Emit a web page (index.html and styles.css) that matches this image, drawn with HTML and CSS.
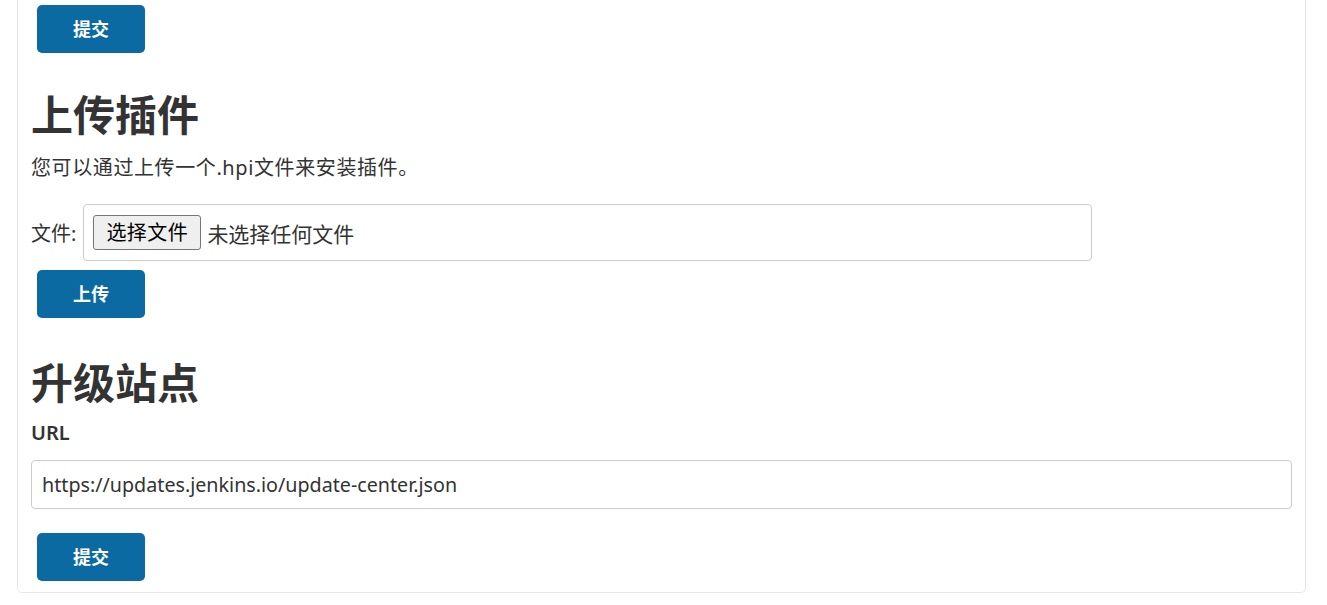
FILE: index.html
```html
<!DOCTYPE html>
<html lang="zh-CN">
<head>
    <meta charset="UTF-8">
    <meta name="viewport" content="width=device-width, initial-scale=1.0">
    <title>插件管理</title>
    <link rel="stylesheet" href="styles.css">
</head>
<body>
    <div class="panel">
        <div class="btn-row">
            <button class="btn" type="button">提交</button>
        </div>

        <h2 class="section-title">上传插件</h2>
        <p class="desc">您可以通过上传一个.hpi文件来安装插件。</p>
        <div class="file-row">
            <span class="file-label">文件:</span>
            <label class="file-box">
                <input type="file" name="name" class="file-input">
                <span class="file-btn">选择文件</span>
                <span class="file-name">未选择任何文件</span>
            </label>
        </div>
        <div class="btn-row upload-row">
            <button class="btn" type="button">上传</button>
        </div>

        <h2 class="section-title site-title">升级站点</h2>
        <div class="field-label">URL</div>
        <input class="url-input" type="text" value="https://updates.jenkins.io/update-center.json">
        <div class="btn-row submit-row">
            <button class="btn" type="button">提交</button>
        </div>
    </div>
</body>
</html>
```

FILE: styles.css
```css
*{
    margin: 0;
    padding: 0;
    box-sizing: border-box;
}
body{
    background: #fff;
    color: #333;
    font-family: "Noto Sans", "Noto Sans CJK SC", sans-serif;
    font-size: 20px;
}
.panel{
    margin: 0 21px 0 17px;
    padding: 5px 13px 11px 13px;
    border: 1px solid #e6e6e6;
    border-top: 0;
    border-radius: 0 0 5px 5px;
}
.btn-row{
    padding-left: 6px;
}
.btn{
    width: 108px;
    height: 48px;
    border: none;
    border-radius: 5px;
    background: #0b6aa2;
    color: #fff;
    font: bold 18px/48px "Noto Sans", "Noto Sans CJK SC", sans-serif;
    cursor: pointer;
}
.section-title{
    margin-top: 34px;
    font-size: 42px;
    line-height: 56px;
    font-weight: bold;
    color: #333;
}
.desc{
    margin-top: 10px;
    line-height: 30px;
    letter-spacing: 0.6px;
}
.file-row{
    display: flex;
    align-items: center;
    gap: 7px;
    margin-top: 21px;
}
.file-box{
    display: flex;
    align-items: center;
    width: 1009px;
    height: 57px;
    padding: 0 9px;
    border: 1px solid #ccc;
    border-radius: 4px;
}
.file-input{
    display: none;
}
.file-btn{
    width: 108px;
    height: 35px;
    margin-right: 6px;
    border: 1px solid #767676;
    border-radius: 3px;
    background: #efefef;
    color: #000;
    text-align: center;
    line-height: 33px;
    letter-spacing: 0.5px;
}
.file-name{
    color: #333;
    font-size: 21px;
}
.upload-row{
    margin-top: 9px;
}
.site-title{
    margin-top: 37px;
}
.field-label{
    margin-top: 7px;
    line-height: 30px;
    font-weight: 600;
}
.url-input{
    display: block;
    width: 100%;
    height: 49px;
    margin-top: 12px;
    padding: 0 10px;
    border: 1px solid #ccc;
    border-radius: 4px;
    color: #333;
    font: 19.7px "Noto Sans", "Noto Sans CJK SC", sans-serif;
}
.submit-row{
    margin-top: 24px;
}
```
